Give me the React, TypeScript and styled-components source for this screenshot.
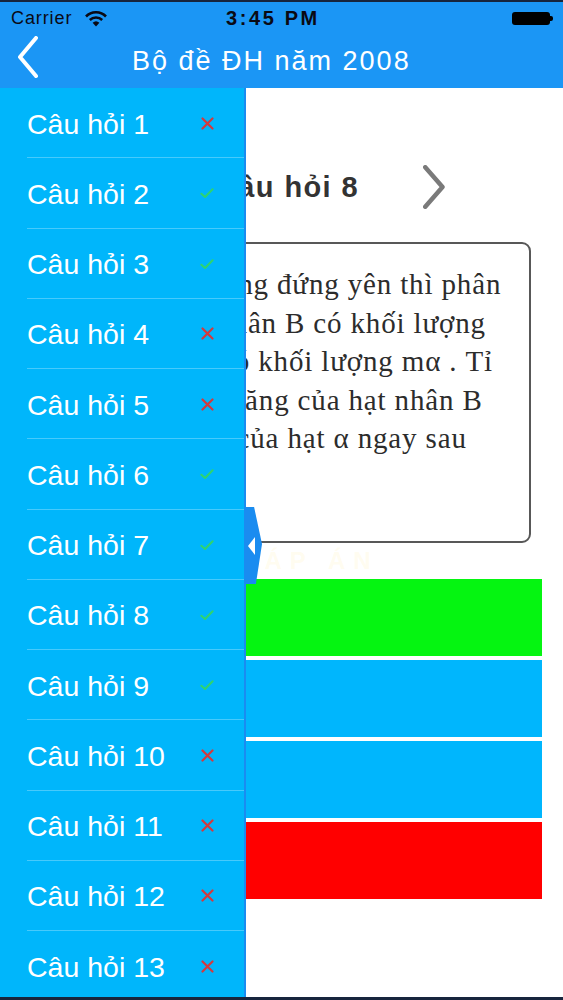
import React from "react"
import styled, { createGlobalStyle } from "styled-components"

const GlobalStyle = createGlobalStyle`
  html, body {
    margin: 0;
    padding: 0;
    background: #ffffff;
  }
  body {
    font-family: "Liberation Sans", Arial, sans-serif;
  }
`

const Screen = styled.div`
  position: relative;
  width: 563px;
  height: 1000px;
  box-sizing: border-box;
  overflow: hidden;
  background: #ffffff;
  border-top: 2px solid #17253d;
  border-bottom: 3px solid #17253d;
`

const Header = styled.header`
  background: #1b96f5;
`

const StatusBar = styled.div`
  height: 33px;
  display: grid;
  grid-template-columns: 1fr auto 1fr;
  align-items: center;
  padding: 0 10px 0 11px;
  color: #0a0a14;
  font-size: 18px;
`

const Carrier = styled.div`
  display: flex;
  align-items: center;
  gap: 13px;
  letter-spacing: 0.9px;
`

const Clock = styled.div`
  font-weight: bold;
  font-size: 20px;
  letter-spacing: 2.6px;
  margin-right: 18px;
`

const Battery = styled.div`
  justify-self: end;
  display: flex;
  align-items: center;
`

const BatteryBody = styled.div`
  width: 38px;
  height: 13px;
  border-radius: 3px;
  background: #000;
`

const BatteryNub = styled.div`
  width: 3px;
  height: 5px;
  border-radius: 0 2px 2px 0;
  background: #000;
`

const NavBar = styled.div`
  height: 53px;
  display: flex;
  align-items: center;
  padding-left: 16px;
  color: #ffffff;
`

const BackButton = styled.button`
  border: 0;
  background: none;
  padding: 0;
  margin-top: -9px;
  display: flex;
`

const Title = styled.h1`
  margin: 0 0 0 94px;
  font-size: 27px;
  font-weight: normal;
  letter-spacing: 2px;
`

const Content = styled.main`
  padding-top: 77px;
`

const QuestionNav = styled.div`
  height: 44px;
  display: flex;
  align-items: center;
  justify-content: center;
  gap: 64px;
  padding-left: 12px;
`

const Arrow = styled.button`
  border: 0;
  background: none;
  padding: 0;
  display: flex;
`

const QuestionTitle = styled.h2`
  margin: 0;
  font-size: 29px;
  font-weight: bold;
  color: #333333;
  letter-spacing: 1.4px;
`

const Card = styled.div`
  margin: 33px 32px 0 32px;
  height: 301px;
  box-sizing: border-box;
  border: 2px solid #585858;
  border-radius: 9px;
  padding: 21px 0 0 28px;
  font-family: "Liberation Serif", "Times New Roman", serif;
  font-size: 29px;
  letter-spacing: 0.85px;
  line-height: 38.5px;
  color: #2c2c2c;
`

const Hint = styled.div`
  height: 36px;
  display: flex;
  align-items: center;
  justify-content: center;
  font-size: 24px;
  font-weight: bold;
  color: rgba(255, 236, 140, 0.14);
  letter-spacing: 8px;
`

const Answers = styled.div`
  display: flex;
  flex-direction: column;
  gap: 4px;
  margin: 0 21px;
`

const Answer = styled.div<{ $tone: string }>`
  height: 77px;
  background: ${(p) => p.$tone};
`

const Drawer = styled.aside`
  position: absolute;
  top: 86px;
  left: 0;
  bottom: 0;
  width: 244px;
  background: #00b6fb;
  border-right: 2px solid #1a8cf0;
`

const Row = styled.div`
  position: relative;
  height: 70.25px;
  display: flex;
  align-items: center;
  padding-left: 27px;
  box-sizing: border-box;
  &::after {
    content: "";
    position: absolute;
    left: 27px;
    right: 0;
    bottom: 0;
    height: 1px;
    background: rgba(255, 255, 255, 0.28);
  }
`

const RowLabel = styled.span`
  width: 173px;
  font-size: 28.5px;
  color: #ffffff;
  padding-top: 2px;
`

const Mark = styled.span`
  display: flex;
  width: 14px;
  justify-content: center;
`

const Handle = styled.div`
  position: absolute;
  left: 100%;
  top: 419px;
  width: 18px;
  height: 77px;
  background: #1a8cf0;
  clip-path: polygon(0 0, 56% 0, 100% 48%, 66% 100%, 0 100%);
  display: flex;
  align-items: center;
  padding-left: 4px;
  box-sizing: border-box;
`

const Wifi = () => (
  <svg width="22" height="16" viewBox="0 0 22 16">
    <path d="M1 5.5 A14 14 0 0 1 21 5.5" stroke="#0a0a14" strokeWidth="2.6" fill="none" />
    <path d="M4.8 9 A9 9 0 0 1 17.2 9" stroke="#0a0a14" strokeWidth="2.6" fill="none" />
    <path d="M11 15.5 L7.6 11.8 A5 5 0 0 1 14.4 11.8 Z" fill="#0a0a14" />
  </svg>
)

const Chevron = ({ dir, color, w, h, sw }: { dir: "left" | "right"; color: string; w: number; h: number; sw: number }) => (
  <svg width={w} height={h} viewBox={`0 0 ${w} ${h}`}>
    <polyline
      points={
        dir === "left"
          ? `${w - sw / 2},${sw / 2} ${sw},${h / 2} ${w - sw / 2},${h - sw / 2}`
          : `${sw / 2},${sw / 2} ${w - sw},${h / 2} ${sw / 2},${h - sw / 2}`
      }
      stroke={color}
      strokeWidth={sw}
      fill="none"
      strokeLinecap="round"
      strokeLinejoin="round"
    />
  </svg>
)

const Cross = () => (
  <svg width="13" height="13" viewBox="0 0 13 13">
    <path d="M1.5 1.5 L11.5 11.5 M11.5 1.5 L1.5 11.5" stroke="#d23a3f" strokeWidth="2.2" strokeLinecap="round" />
  </svg>
)

const Check = () => (
  <svg width="15" height="12" viewBox="0 0 15 12">
    <path d="M1.5 6.8 L5.4 10.2 L13.5 2" stroke="#2fd36f" strokeWidth="2.2" fill="none" strokeLinecap="round" strokeLinejoin="round" />
  </svg>
)

const results = [false, true, true, false, false, true, true, true, true, false, false, false, false]

const lines = [
  "Hạt nhân A đang đứng yên thì phân",
  "rã thành hạt nhân B có khối lượng",
  "mB và hạt α có khối lượng mα . Tỉ",
  "số giữa động năng của hạt nhân B",
  "và động năng của hạt α ngay sau",
  "phân rã",
]

const App = () => {
  return (
    <Screen>
      <GlobalStyle />
      <Header>
        <StatusBar>
          <Carrier>
            Carrier
            <Wifi />
          </Carrier>
          <Clock>3:45 PM</Clock>
          <Battery>
            <BatteryBody />
            <BatteryNub />
          </Battery>
        </StatusBar>
        <NavBar>
          <BackButton>
            <Chevron dir="left" color="#ffffff" w={22} h={42} sw={4} />
          </BackButton>
          <Title>Bộ đề ĐH năm 2008</Title>
        </NavBar>
      </Header>

      <Content>
        <QuestionNav>
          <Arrow>
            <Chevron dir="left" color="#7a7a7a" w={24} h={44} sw={4.5} />
          </Arrow>
          <QuestionTitle>Câu hỏi 8</QuestionTitle>
          <Arrow>
            <Chevron dir="right" color="#7a7a7a" w={24} h={44} sw={4.5} />
          </Arrow>
        </QuestionNav>
        <Card>
          {lines.map((l) => (
            <div key={l}>{l}</div>
          ))}
        </Card>
        <Hint>A. ĐÁP ÁN</Hint>
        <Answers>
          <Answer $tone="#05f511" />
          <Answer $tone="#00b6fd" />
          <Answer $tone="#00b6fd" />
          <Answer $tone="#ff0000" />
        </Answers>
      </Content>

      <Drawer>
        {results.map((ok, i) => (
          <Row key={i}>
            <RowLabel>Câu hỏi {i + 1}</RowLabel>
            <Mark>{ok ? <Check /> : <Cross />}</Mark>
          </Row>
        ))}
        <Handle>
          <svg width="8" height="18" viewBox="0 0 8 18">
            <path d="M0 9 L7 0 L7 18 Z" fill="#ffffff" />
          </svg>
        </Handle>
      </Drawer>
    </Screen>
  )
}

export default App
